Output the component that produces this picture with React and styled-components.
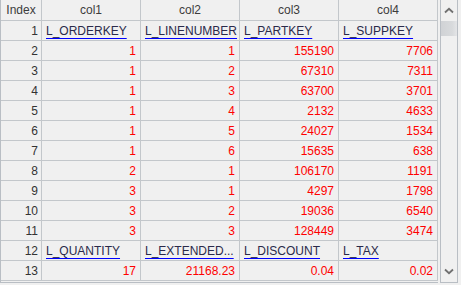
import React from "react";
import styled, { createGlobalStyle } from "styled-components";

const GlobalStyle = createGlobalStyle`
  html, body {
    margin: 0;
    padding: 0;
    background: #f0f0f0;
  }
  body {
    font-family: "Liberation Sans", Arial, sans-serif;
    font-size: 12px;
  }
`;

const Frame = styled.div`
  display: flex;
  width: 461px;
  height: 285px;
  box-sizing: border-box;
  background: #f0f0f0;
  overflow: hidden;
`;

const GridWrap = styled.div`
  display: flex;
  flex-direction: column;
  width: 438px;
  height: 283px;
  border-left: 1px solid #b9bec4;
  border-bottom: 1px solid #b9bec4;
  box-sizing: border-box;
`;

const Row = styled.div`
  display: grid;
  grid-template-columns: 40px 98px 98px 98px 98px;
  column-gap: 1px;
  background: #c3c7cb;
  border-bottom: 1px solid #c3c7cb;
  height: ${(p) => (p.$head ? "21px" : "20px")};
  box-sizing: border-box;
  padding-right: 1px;
`;

const Cell = styled.div`
  background: #f0f0f0;
  display: flex;
  align-items: center;
  justify-content: ${(p) =>
    p.$align === "center" ? "center" : p.$align === "left" ? "flex-start" : "flex-end"};
  padding: 0 4px 0 4px;
  color: ${(p) => (p.$red ? "#ff0000" : "#3c3c3c")};
  white-space: nowrap;
  overflow: hidden;
  line-height: 1;
`;

const IndexCell = styled(Cell)`
  padding-right: 3px;
  color: #333;
`;

const Link = styled.span`
  color: #2a2a4a;
  text-decoration: underline;
  text-decoration-color: #0000ff;
  text-underline-offset: 3px;
  margin-top: 1px;
`;

const Scrollbar = styled.div`
  margin-left: 2px;
  width: 18px;
  height: 283px;
  border-left: 1px solid #b9bec4;
  border-right: 1px solid #b9bec4;
  border-bottom: 1px solid #b9bec4;
  box-sizing: border-box;
  display: flex;
  flex-direction: column;
  background: #f0f0f0;
`;

const Arrow = styled.div`
  height: 21px;
  display: flex;
  align-items: center;
  justify-content: center;
  flex: none;
`;

const Thumb = styled.div`
  height: 15px;
  flex: none;
  background: linear-gradient(90deg, #d0d2d5 0%, #d8dadc 70%, #e4e5e7 100%);
`;

const Track = styled.div`
  flex: 1;
`;

const headers = ["col1", "col2", "col3", "col4"];

// [cell, type] where type: "l" link, "n" red number
const rows = [
  [["L_ORDERKEY", "l"], ["L_LINENUMBER", "l"], ["L_PARTKEY", "l"], ["L_SUPPKEY", "l"]],
  [["1"], ["1"], ["155190"], ["7706"]],
  [["1"], ["2"], ["67310"], ["7311"]],
  [["1"], ["3"], ["63700"], ["3701"]],
  [["1"], ["4"], ["2132"], ["4633"]],
  [["1"], ["5"], ["24027"], ["1534"]],
  [["1"], ["6"], ["15635"], ["638"]],
  [["2"], ["1"], ["106170"], ["1191"]],
  [["3"], ["1"], ["4297"], ["1798"]],
  [["3"], ["2"], ["19036"], ["6540"]],
  [["3"], ["3"], ["128449"], ["3474"]],
  [["L_QUANTITY", "l"], ["L_EXTENDED...", "l"], ["L_DISCOUNT", "l"], ["L_TAX", "l"]],
  [["17"], ["21168.23"], ["0.04"], ["0.02"]],
];

const Chevron = ({ up }) => (
  <svg width="10" height="7" viewBox="0 0 10 7">
    <path
      d={up ? "M1 5.5 L5 1.8 L9 5.5" : "M1 1.5 L5 5.2 L9 1.5"}
      fill="none"
      stroke="#707070"
      strokeWidth="1.8"
    />
  </svg>
);

export default function App() {
  return (
    <>
      <GlobalStyle />
      <Frame>
        <GridWrap>
          <Row $head>
            <Cell $align="center">Index</Cell>
            {headers.map((h) => (
              <Cell key={h} $align="center">
                {h}
              </Cell>
            ))}
          </Row>
          {rows.map((r, i) => (
            <Row key={i}>
              <IndexCell>{i + 1}</IndexCell>
              {r.map(([v, t], j) =>
                t === "l" ? (
                  <Cell key={j} $align="left">
                    <Link>{v}</Link>
                  </Cell>
                ) : (
                  <Cell key={j} $red>
                    {v}
                  </Cell>
                )
              )}
            </Row>
          ))}
        </GridWrap>
        <Scrollbar>
          <Arrow>
            <Chevron up />
          </Arrow>
          <Thumb />
          <Track />
          <Arrow>
            <Chevron />
          </Arrow>
        </Scrollbar>
      </Frame>
    </>
  );
}
